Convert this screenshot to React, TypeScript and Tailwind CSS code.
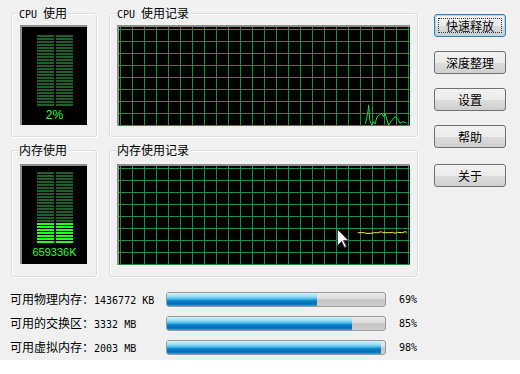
import React from 'react';

const mono = "font-['DejaVu_Sans_Mono',monospace] text-[10px]";

const rows = Array.from({ length: 24 }, (_, i) => i);
const vLines = Array.from({ length: 25 }, (_, i) => 3 + i * 12);
const hLines = Array.from({ length: 9 }, (_, i) => 4 + i * 12);

const cpuLine =
  '248.3,99 250.7,88.3 251.7,80 252.7,95 254.7,100 256.7,96.7 258,99 260,91.7 262.3,90 264.7,88.3 266.7,91.7 268,88.3 270,95 271.7,100 274,96.7 278,91.7 280.7,93.3 283,98.3 285.7,96.7 289,97.7';
const memLine =
  '240.7,68.7 247.3,68.7 249,69.3 254,69.3 257.3,68.7 260.7,68.7 264,67.7 265.7,68.7 272.3,68.7 275.7,68.3 278,69.3 280.7,68.3 285.7,68.7 288,67.7 290,68.3';

function Group({ title, className, children }: { title: React.ReactNode; className: string; children: React.ReactNode }) {
  return (
    <div className={`relative rounded-[3px] border border-[#d5dfe5] shadow-[inset_1px_1px_0_#fff,1px_1px_0_#fff] ${className}`}>
      <div className="absolute top-[-8px] left-[6px] bg-[#f0f0f0] px-[1px] text-[12px] leading-[14px] whitespace-nowrap">{title}</div>
      {children}
    </div>
  );
}

// bar meter, like the task manager one
function Meter({ lit, label, top, labelClass }: { lit: number; label: string; top: number; labelClass: string }) {
  return (
    <div className="flex h-[100px] w-[67px] flex-col items-center border-t-2 border-l-2 border-[#8e8e8e] bg-black">
      <svg width="65" height={top + 72} className="shrink-0">
        {rows.map((r) => {
          const on = r >= 24 - lit;
          const c = on ? '#22ff22' : '#1f5f2a';
          const y = top + r * 3;
          return (
            <g key={r}>
              <rect x="15" y={y} width="17" height="2" fill={c} />
              <rect x="34" y={y} width="17" height="2" fill={c} />
            </g>
          );
        })}
      </svg>
      <div className={`mt-[1px] leading-[14px] text-[#33ff33] ${labelClass}`}>{label}</div>
    </div>
  );
}

function Graph({ line, color, cursor }: { line: string; color: string; cursor?: boolean }) {
  return (
    <svg width="293" height="101" className="block">
      <rect x="0" y="0" width="293" height="101" fill="#000" />
      {vLines.map((x) => (
        <line key={'v' + x} x1={x + 0.5} y1="0" x2={x + 0.5} y2="101" stroke="#1c9145" strokeWidth="1" />
      ))}
      {hLines.map((y) => (
        <line key={'h' + y} x1="0" y1={y + 0.5} x2="293" y2={y + 0.5} stroke="#1c9145" strokeWidth="1" />
      ))}
      <rect x="0" y="0" width="293" height="2" fill="#8e8e8e" />
      <rect x="0" y="0" width="2" height="101" fill="#8e8e8e" />
      <polyline points={line} fill="none" stroke={color} strokeWidth="1" />
      {cursor && (
        <path
          d="M220.5 65.5 L220.5 81.5 L224.5 77.5 L227.5 83.5 L229.5 82.5 L226.5 76.5 L231.5 76.5 Z"
          fill="#fff"
          stroke="#444"
          strokeWidth="1"
        />
      )}
    </svg>
  );
}

function Btn({ label, focused, className = '' }: { label: string; focused?: boolean; className?: string }) {
  return (
    <button
      className={`relative block h-[23px] w-[72px] shrink-0 rounded-[3px] border text-[12px] leading-none text-black bg-[linear-gradient(to_bottom,#f2f2f2_0%,#ebebeb_50%,#dddddd_51%,#cfcfcf_100%)] ${
        focused ? 'border-[#3c7fb1] shadow-[inset_0_0_0_1px_#a7d9f5]' : 'border-[#707070]'
      } ${className}`}
    >
      {focused && <span className="absolute inset-[3px] border border-dotted border-[#333]" />}
      {label}
    </button>
  );
}

function UsageRow({ label, value, pct }: { label: string; value: string; pct: number }) {
  return (
    <div className="flex h-[15px] items-center">
      <div className="w-[166px] pl-[10px] text-[12px] leading-none whitespace-nowrap">
        {label}：<span className={mono}>{value}</span>
      </div>
      <div className="h-[15px] w-[220px] overflow-hidden rounded-[3px] border border-[#9c9c9c] bg-[linear-gradient(to_bottom,#ececec_0%,#dadada_45%,#c4c4c4_55%,#cfcfcf_100%)]">
        <div
          className="h-full bg-[linear-gradient(to_bottom,#d0f3fc_0%,#8fdcf5_30%,#35b2e6_48%,#0a7cc2_62%,#0a6fb3_85%,#2e9fd8_100%)]"
          style={{ width: `${pct}%` }}
        />
      </div>
      <div className={`ml-[13px] ${mono}`}>{pct}%</div>
    </div>
  );
}

export default function App() {
  return (
    <div className="h-[374px] w-[520px] overflow-hidden bg-white font-['Noto_Sans_CJK_SC',sans-serif] text-black">
      <div className="h-[360px] bg-[#f0f0f0]">
        <div className="flex pt-[13px] pl-[11px]">
          <div className="flex w-[407px] flex-col gap-[13px]">
            <div className="flex gap-[12px]">
              <Group title={<><span className={mono}>CPU </span>使用</>} className="h-[124px] w-[86px] pt-[11px] pl-[8px]">
                <Meter lit={0} label="2%" top={8} labelClass="font-['Liberation_Sans',sans-serif] text-[12px]" />
              </Group>
              <Group title={<><span className={mono}>CPU </span>使用记录</>} className="h-[124px] w-[309px] pt-[11px] pl-[7px]">
                <Graph line={cpuLine} color="#22dd44" />
              </Group>
            </div>
            <div className="flex gap-[12px]">
              <Group title="内存使用" className="h-[127px] w-[86px] pt-[13px] pl-[8px]">
                <Meter lit={7} label="659336K" top={6} labelClass="font-['Liberation_Sans',sans-serif] text-[11px]" />
              </Group>
              <Group title="内存使用记录" className="h-[127px] w-[309px] pt-[13px] pl-[7px]">
                <Graph line={memLine} color="#f0f050" cursor />
              </Group>
            </div>
          </div>
          <div className="ml-[16px] flex flex-col gap-[14px] pt-[1px]">
            <Btn label="快速释放" focused />
            <Btn label="深度整理" />
            <Btn label="设置" />
            <Btn label="帮助" />
            <Btn label="关于" className="mt-[2px]" />
          </div>
        </div>
        <div className="mt-[15px] flex flex-col gap-[9px]">
          <UsageRow label="可用物理内存" value="1436772 KB" pct={69} />
          <UsageRow label="可用的交换区" value="3332 MB" pct={85} />
          <UsageRow label="可用虚拟内存" value="2003 MB" pct={98} />
        </div>
      </div>
    </div>
  );
}
